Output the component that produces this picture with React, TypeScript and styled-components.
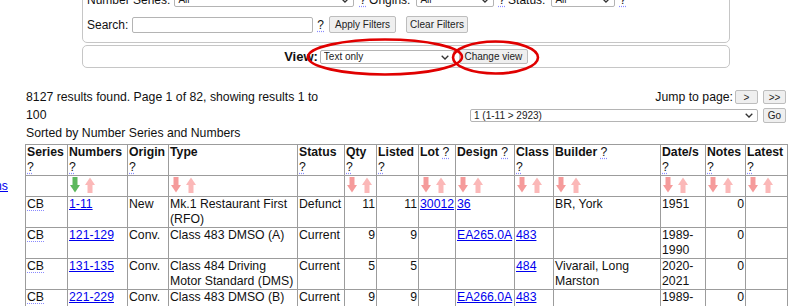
import React from "react";
import styled, { createGlobalStyle } from "styled-components";

const GlobalStyle = createGlobalStyle`
  html, body { margin: 0; padding: 0; background: #fff; overflow: hidden; }
  body {
    font-family: "Liberation Sans", Arial, sans-serif;
    font-size: 12.25px;
    color: #111;
  }
`;

const Page = styled.div`
  display: flex;
  width: 800px;
  height: 306px;
  overflow: hidden;
`;

const Sidebar = styled.div`
  width: 8px;
  flex-shrink: 0;
  overflow: hidden;
  display: flex;
  justify-content: flex-end;
  align-items: flex-start;
  padding-top: 179px;
  box-sizing: border-box;
  line-height: 15px;
`;

const SideLink = styled.a`
  flex-shrink: 0;
  white-space: nowrap;
  color: #0000ee;
  text-decoration: underline;
`;

const Main = styled.div`
  margin-left: 17px;
  width: 762px;
  flex-shrink: 0;
`;

const FilterBox = styled.div`
  width: 648px;
  box-sizing: border-box;
  margin: -18px auto 0;
  border: 1px solid #c6c6c6;
  border-radius: 5px;
  padding: 4px 4px 5px;
  font-size: 12px;
`;

const FilterRow = styled.div`
  display: flex;
  align-items: center;
  height: 25px;
  white-space: nowrap;
`;

const Label = styled.span<{ $ml?: number }>`
  margin-left: ${(p) => p.$ml ?? 0}px;
`;

const Q = styled.abbr<{ $ml?: number }>`
  margin-left: ${(p) => p.$ml ?? 0}px;
  font-weight: normal;
  text-decoration: underline dotted #8a8aff;
  text-underline-offset: 2px;
  cursor: help;
`;

const SelectWrap = styled.span<{ $w: number; $h: number; $ml?: number }>`
  position: relative;
  display: inline-block;
  flex-shrink: 0;
  width: ${(p) => p.$w}px;
  height: ${(p) => p.$h}px;
  margin-left: ${(p) => p.$ml ?? 0}px;
`;

const Select = styled.select`
  appearance: none;
  -webkit-appearance: none;
  display: block;
  width: 100%;
  height: 100%;
  box-sizing: border-box;
  font-family: "Liberation Sans", Arial, sans-serif;
  font-size: 10px;
  color: #222;
  background: #fff;
  border: 1px solid #b4b4b4;
  border-radius: 2px;
  padding: 0 14px 0 3px;
  margin: 0;
`;

const Chevron = styled.svg`
  position: absolute;
  right: 5px;
  top: 50%;
  width: 8px;
  height: 5px;
  margin-top: -2px;
  pointer-events: none;
`;

const Button = styled.button<{ $w: number; $h: number; $ml?: number }>`
  flex-shrink: 0;
  width: ${(p) => p.$w}px;
  height: ${(p) => p.$h}px;
  margin-left: ${(p) => p.$ml ?? 0}px;
  padding: 0;
  box-sizing: border-box;
  font-family: "Liberation Sans", Arial, sans-serif;
  font-size: 10px;
  color: #222;
  background: #efefef;
  border: 1px solid #bdbdbd;
  border-radius: 2px;
`;

const TextInput = styled.input<{ $w: number; $ml?: number }>`
  width: ${(p) => p.$w}px;
  height: 16px;
  margin: 0 0 0 ${(p) => p.$ml ?? 0}px;
  box-sizing: border-box;
  border: 1px solid #b4b4b4;
  border-radius: 2px;
  padding: 0 2px;
  font-size: 10px;
`;

const ViewBox = styled.div`
  position: relative;
  width: 648px;
  height: 23px;
  box-sizing: border-box;
  margin: 2px auto 0;
  border: 1px solid #c6c6c6;
  border-radius: 5px;
  display: flex;
  align-items: center;
  justify-content: center;
  white-space: nowrap;
`;

const ViewLabel = styled.span`
  font-weight: bold;
  font-size: 13px;
  color: #111;
  margin-right: 2px;
`;

const Annotation = styled.svg`
  position: absolute;
  left: 0;
  top: 0;
  width: 100%;
  height: 100%;
  overflow: visible;
  pointer-events: none;
`;

const ResultsBar = styled.div`
  display: flex;
  margin-top: 20px;
  line-height: 18px;
`;

const Summary = styled.div`
  width: 305px;
  padding-left: 1px;
`;

const Jump = styled.div`
  flex: 1;
  display: flex;
  flex-direction: column;
  align-items: flex-end;
  padding-right: 1px;
`;

const JumpRow = styled.div`
  display: flex;
  align-items: center;
  height: 18px;
`;

const SortNote = styled.div`
  line-height: 18px;
  padding-left: 1px;
`;

const Table = styled.table`
  margin-top: 2px;
  width: 762px;
  border-collapse: collapse;
  table-layout: fixed;
  line-height: 15px;
`;

const Th = styled.th`
  border: 1px solid #9c9c9c;
  padding: 0 1px;
  vertical-align: top;
  text-align: left;
  font-weight: bold;
`;

const Td = styled.td<{ $right?: boolean }>`
  border: 1px solid #9c9c9c;
  padding: 0 1px;
  vertical-align: top;
  text-align: ${(p) => (p.$right ? "right" : "left")};
`;

const ArrowCell = styled.td`
  border: 1px solid #9c9c9c;
  padding: 0 1px 0 2px;
  height: 20px;
  vertical-align: top;
`;

const ArrowPair = styled.span`
  display: flex;
  gap: 5px;
  padding-top: 1px;
`;

const Link = styled.a`
  color: #0000ee;
  text-decoration: underline;
`;

const Abbr = styled.abbr`
  text-decoration: underline dotted #8a8aff;
  text-underline-offset: 2px;
`;

const Arrow: React.FC<{ dir: "up" | "down"; color: string }> = ({ dir, color }) => (
  <svg width="10" height="16" viewBox="0 0 10 16" style={{ display: "block" }}>
    {dir === "down" ? (
      <>
        <rect x="2.5" y="0" width="5" height="9" fill={color} />
        <polygon points="0,8 10,8 5,15.5" fill={color} />
      </>
    ) : (
      <>
        <polygon points="0,8 10,8 5,0.5" fill={color} />
        <rect x="2.5" y="7" width="5" height="9" fill={color} />
      </>
    )}
  </svg>
);

const Sel: React.FC<{ w: number; h: number; ml?: number; value: string }> = ({ w, h, ml, value }) => (
  <SelectWrap $w={w} $h={h} $ml={ml}>
    <Select defaultValue={value}>
      <option>{value}</option>
    </Select>
    <Chevron viewBox="0 0 8 5">
      <polyline points="0.7,0.8 4,4 7.3,0.8" fill="none" stroke="#333" strokeWidth="1.3" />
    </Chevron>
  </SelectWrap>
);

const cols = [42, 60, 41, 129, 47, 32, 42, 37, 59, 39, 107, 45, 40, 42];

const headers: { label: string; q: boolean; arrows: "none" | "green" | "pink" }[] = [
  { label: "Series", q: true, arrows: "none" },
  { label: "Numbers", q: true, arrows: "green" },
  { label: "Origin", q: true, arrows: "none" },
  { label: "Type", q: false, arrows: "pink" },
  { label: "Status", q: true, arrows: "none" },
  { label: "Qty", q: true, arrows: "pink" },
  { label: "Listed", q: true, arrows: "none" },
  { label: "Lot", q: true, arrows: "pink" },
  { label: "Design", q: true, arrows: "pink" },
  { label: "Class", q: true, arrows: "pink" },
  { label: "Builder", q: true, arrows: "pink" },
  { label: "Date/s", q: true, arrows: "pink" },
  { label: "Notes", q: true, arrows: "pink" },
  { label: "Latest", q: true, arrows: "pink" },
];

type Row = {
  nums: string;
  origin: string;
  type: string;
  status: string;
  qty: string;
  listed: string;
  lot: string;
  design: string;
  cls: string;
  builder: string;
  date: string;
  notes: string;
};

const rows: Row[] = [
  { nums: "1-11", origin: "New", type: "Mk.1 Restaurant First (RFO)", status: "Defunct", qty: "11", listed: "11", lot: "30012", design: "36", cls: "", builder: "BR, York", date: "1951", notes: "0" },
  { nums: "121-129", origin: "Conv.", type: "Class 483 DMSO (A)", status: "Current", qty: "9", listed: "9", lot: "", design: "EA265.0A", cls: "483", builder: "", date: "1989-1990", notes: "0" },
  { nums: "131-135", origin: "Conv.", type: "Class 484 Driving Motor Standard (DMS)", status: "Current", qty: "5", listed: "5", lot: "", design: "", cls: "484", builder: "Vivarail, Long Marston", date: "2020-2021", notes: "0" },
  { nums: "221-229", origin: "Conv.", type: "Class 483 DMSO (B)", status: "Current", qty: "9", listed: "9", lot: "", design: "EA266.0A", cls: "483", builder: "", date: "1989-1990", notes: "0" },
];

const GREEN = "#5cb85c";
const PINK_DOWN = "#f59b9b";
const PINK_UP = "#fbb8b8";

export default function App() {
  return (
    <>
      <GlobalStyle />
      <Page>
        <Sidebar>
          <SideLink href="#">Options</SideLink>
        </Sidebar>
        <Main>
          <FilterBox>
            <FilterRow>
              <Label>Number Series:</Label>
              <Sel w={180} h={15} ml={4} value="All" />
              <Q $ml={5}>?</Q>
              <Label $ml={3}>Origins:</Label>
              <Sel w={78} h={15} ml={6} value="All" />
              <Q $ml={4}>?</Q>
              <Label $ml={3}>Status:</Label>
              <Sel w={64} h={15} ml={6} value="All" />
              <Q $ml={4}>?</Q>
            </FilterRow>
            <FilterRow>
              <Label>Search:</Label>
              <TextInput $w={181} $ml={4} />
              <Q $ml={4}>?</Q>
              <Button $w={67} $h={17} $ml={5}>Apply Filters</Button>
              <Button $w={62} $h={17} $ml={10}>Clear Filters</Button>
            </FilterRow>
          </FilterBox>
          <ViewBox>
            <ViewLabel>View:</ViewLabel>
            <Sel w={134} h={14} value="Text only" />
            <Button $w={69} $h={15} $ml={5}>Change view</Button>
            <Annotation>
              <ellipse cx="302" cy="11" rx="77" ry="17.5" fill="none" stroke="#e00000" strokeWidth="2.6" />
              <ellipse cx="412.5" cy="11.5" rx="42.5" ry="16" fill="none" stroke="#e00000" strokeWidth="2.6" />
            </Annotation>
          </ViewBox>
          <ResultsBar>
            <Summary>8127 results found. Page 1 of 82, showing results 1 to 100</Summary>
            <Jump>
              <JumpRow>
                <span>Jump to page:</span>
                <Button $w={23} $h={14} $ml={2}>&gt;</Button>
                <Button $w={23} $h={14} $ml={5}>&gt;&gt;</Button>
              </JumpRow>
              <JumpRow>
                <Sel w={288} h={13} value="1 (1-11 > 2923)" />
                <Button $w={23} $h={15} $ml={5}>Go</Button>
              </JumpRow>
            </Jump>
          </ResultsBar>
          <SortNote>Sorted by Number Series and Numbers</SortNote>
          <Table>
            <colgroup>
              {cols.map((w, i) => (
                <col key={i} style={{ width: w }} />
              ))}
            </colgroup>
            <thead>
              <tr>
                {headers.map((h) => (
                  <Th key={h.label}>
                    {h.label}
                    {h.q && (
                      <>
                        {" "}
                        <Q>?</Q>
                      </>
                    )}
                  </Th>
                ))}
              </tr>
              <tr>
                {headers.map((h) => (
                  <ArrowCell key={h.label}>
                    {h.arrows !== "none" && (
                      <ArrowPair>
                        <Arrow dir="down" color={h.arrows === "green" ? GREEN : PINK_DOWN} />
                        <Arrow dir="up" color={PINK_UP} />
                      </ArrowPair>
                    )}
                  </ArrowCell>
                ))}
              </tr>
            </thead>
            <tbody>
              {rows.map((r) => (
                <tr key={r.nums}>
                  <Td>
                    <Abbr>CB</Abbr>
                  </Td>
                  <Td>
                    <Link href="#">{r.nums}</Link>
                  </Td>
                  <Td>{r.origin}</Td>
                  <Td>{r.type}</Td>
                  <Td>{r.status}</Td>
                  <Td $right>{r.qty}</Td>
                  <Td $right>{r.listed}</Td>
                  <Td>{r.lot && <Link href="#">{r.lot}</Link>}</Td>
                  <Td>{r.design && <Link href="#">{r.design}</Link>}</Td>
                  <Td>{r.cls && <Link href="#">{r.cls}</Link>}</Td>
                  <Td>{r.builder}</Td>
                  <Td>{r.date}</Td>
                  <Td $right>{r.notes}</Td>
                  <Td></Td>
                </tr>
              ))}
            </tbody>
          </Table>
        </Main>
      </Page>
    </>
  );
}
